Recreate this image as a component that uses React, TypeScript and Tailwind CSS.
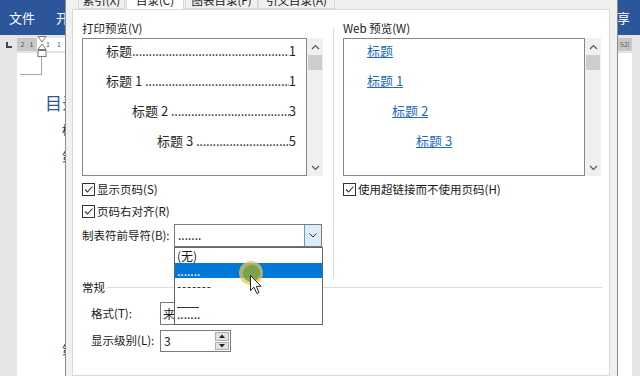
import React from 'react';

const FONT = "font-['Noto_Sans_CJK_SC','Noto_Sans',sans-serif]";

function Check() {
  return (
    <div className="w-[13px] h-[13px] border border-[#333] bg-white flex items-center justify-center">
      <svg width="11" height="11" viewBox="0 0 11 11">
        <path d="M2 5.5 L4.5 8 L9.5 2.5" fill="none" stroke="#333" strokeWidth="1.1" />
      </svg>
    </div>
  );
}

function CheckRow({ label, className = '' }: { label: string; className?: string }) {
  return (
    <div className={`flex items-center gap-[2px] h-[16px] ${className}`}>
      <Check />
      <span className="text-[11.5px] leading-[16px] text-[#1a1a1a]">{label}</span>
    </div>
  );
}

function Scrollbar() {
  return (
    <div className="w-[16px] h-[138px] bg-[#f0f0f0] flex flex-col">
      <div className="h-[17px] flex items-center justify-center">
        <svg width="9" height="6" viewBox="0 0 9 6">
          <path d="M1 5 L4.5 1.5 L8 5" fill="none" stroke="#555" strokeWidth="1.2" />
        </svg>
      </div>
      <div className="h-[15px] mx-[1px] bg-[#cdcdcd]" />
      <div className="flex-1" />
      <div className="h-[16px] flex items-center justify-center">
        <svg width="9" height="6" viewBox="0 0 9 6">
          <path d="M1 1 L4.5 4.5 L8 1" fill="none" stroke="#555" strokeWidth="1.2" />
        </svg>
      </div>
    </div>
  );
}

const printRows = [
  { label: '标题', page: '1', indent: 'pl-[23px]' },
  { label: '标题 1 ', page: '1', indent: 'pl-[23px]' },
  { label: '标题 2 ', page: '3', indent: 'pl-[49px]' },
  { label: '标题 3 ', page: '5', indent: 'pl-[74px]' },
];

const webRows = [
  { label: '标题', indent: 'pl-[23px]' },
  { label: '标题 1', indent: 'pl-[23px]' },
  { label: '标题 2', indent: 'pl-[48px]' },
  { label: '标题 3', indent: 'pl-[72px]' },
];

export default function App() {
  return (
    <div className={`relative w-[640px] h-[376px] overflow-hidden bg-[#e6e6e6] ${FONT}`}>
      {/* Word window behind */}
      <div className="flex flex-col h-full">
        <div className="h-[35px] bg-[#2b579a] flex items-center justify-between text-white text-[13px]">
          <div className="flex items-center">
            <span className="ml-[9px]">文件</span>
            <span className="ml-[21px]">开始</span>
          </div>
          <span className="mr-[10px]">共享</span>
        </div>
        <div className="h-[18px] flex items-center">
          <div className="w-[17px] h-full flex items-center justify-center">
            <div className="w-[6px] h-[6px] border-l-2 border-b-2 border-[#444] mt-[2px]" />
          </div>
          <div className="flex-1 h-[13px] flex text-[7px] leading-[13px] text-[#555]">
            <div className="w-[20px] bg-[#c8c8c8] flex justify-around px-[1px]">
              <span>2</span>
              <span>1</span>
            </div>
            <div className="flex-1 bg-white flex gap-[7px] pl-[9px]">
              <span>1</span>
              <span>1</span>
              <span>2</span>
            </div>
            <div className="w-[14px] bg-[#c8c8c8] pl-[2px]">52|</div>
          </div>
          <div className="w-[8px]" />
        </div>
        <div className="flex-1 flex">
          <div className="w-[17px]" />
          <div className="flex-1 bg-white flex flex-col">
            <div className="ml-[3px] mt-[4px] w-[22px] h-[18px] border-r border-b border-[#a6a6a6]" />
            <div className="pl-[28px] mt-[18px] text-[17px] leading-[20px] text-[#2f5597]">目录</div>
            <div className="pl-[45px] mt-[7px] text-[12px] leading-[20px] text-[#222]">标题</div>
            <div className="pl-[45px] mt-[7px] text-[12px] leading-[20px] text-[#222]">第一</div>
            <div className="pl-[45px] mt-[173px] text-[12px] leading-[20px] text-[#222]">第二</div>
          </div>
          <div className="w-[8px]" />
        </div>
      </div>

      {/* ruler indent marker */}
      <svg className="absolute left-[37px] top-[36px]" width="10" height="22" viewBox="0 0 10 22">
        <path d="M1 0.5 L9 0.5 L5 6 Z" fill="#fff" stroke="#777" />
        <path d="M5 8 L9 13.5 L1 13.5 Z" fill="#fff" stroke="#777" />
        <rect x="1" y="14.5" width="8" height="6" fill="#fff" stroke="#777" />
      </svg>

      {/* Dialog window */}
      <div className="absolute left-[65px] top-0 w-[553px] h-[376px] bg-[#f0f0f0] border-l border-r border-[#8c8c8c] flex flex-col pl-[6px] pr-[7px] text-[#1a1a1a]">
        <div className="h-[9px] overflow-hidden shrink-0">
          <div className="flex -mt-[11px] pl-[6px] text-[11.5px]">
            <div className="w-[47px] h-[20px] leading-[20px] text-center border border-[#d9d9d9] bg-[#f0f0f0]">索引(X)</div>
            <div className="w-[58px] h-[20px] leading-[20px] text-center border border-[#d9d9d9] border-b-0 bg-white ml-[1px]">目录(C)</div>
            <div className="w-[73px] h-[20px] leading-[20px] text-center border border-[#d9d9d9] bg-[#f0f0f0] ml-[1px]">图表目录(F)</div>
            <div className="w-[77px] h-[20px] leading-[20px] text-center border border-[#d9d9d9] bg-[#f0f0f0]">引文目录(A)</div>
          </div>
        </div>

        <div className="flex-1 bg-white border border-[#d9d9d9] pt-[10px] pl-[9px] flex flex-col">
          {/* top section: previews */}
          <div className="flex items-start">
            <div className="w-[241px] flex flex-col">
              <div className="h-[16px] text-[11.5px] leading-[16px]">打印预览(V)</div>
              <div className="mt-[2px] flex">
                <div className="w-[225px] h-[138px] border border-[#828790] flex flex-col gap-[10px] pt-[2px] pr-[10px] text-[13px] text-[#262626]">
                  {printRows.map((r) => (
                    <div key={r.label} className={`flex items-center h-[20px] leading-[20px] ${r.indent}`}>
                      <span className="whitespace-pre">{r.label}</span>
                      <span className="flex-1 min-w-0 overflow-hidden whitespace-nowrap tracking-[-0.3px]">
                        {'.'.repeat(90)}
                      </span>
                      <span>{r.page}</span>
                    </div>
                  ))}
                </div>
                <Scrollbar />
              </div>
              <CheckRow label="显示页码(S)" className="mt-[5px]" />
              <CheckRow label="页码右对齐(R)" className="mt-[6px]" />
              <div className="mt-[5px] flex items-center h-[23px]">
                <span className="w-[92px] text-[11.5px]">制表符前导符(B):</span>
                <div className="relative w-[148px] h-[23px] border border-[#7a7a7a] flex">
                  <span className="flex-1 pl-[3px] text-[12px] leading-[20px]">.......</span>
                  <div className="w-[17px] h-full bg-[#dcecfc] border-l border-[#569de5] flex items-center justify-center">
                    <svg width="8" height="5" viewBox="0 0 8 5">
                      <path d="M0.5 0.5 L4 4 L7.5 0.5" fill="none" stroke="#333" strokeWidth="1" />
                    </svg>
                  </div>
                  {/* open dropdown list */}
                  <div className="absolute z-10 left-[-1px] top-[22px] w-[149px] border border-[#646464] bg-white flex flex-col text-[12px] leading-[15px]">
                    <div className="h-[15px] pl-[2px]">(无)</div>
                    <div className="h-[15px] pl-[2px] bg-[#0078d7] text-white">.......</div>
                    <div className="h-[15px] pl-[2px] tracking-[0.8px]">-------</div>
                    <div className="h-[15px] pl-[2px] flex items-end">
                      <div className="w-[22px] h-px bg-[#333]" />
                    </div>
                    <div className="h-[16px] pl-[2px] leading-[12px]">.......</div>
                  </div>
                </div>
              </div>
            </div>

            <div className="ml-[10px] mt-[8px] w-px h-[250px] bg-[#dcdcdc]" />

            <div className="ml-[9px] w-[258px] flex flex-col">
              <div className="h-[16px] text-[11.5px] leading-[16px]">Web 预览(W)</div>
              <div className="mt-[2px] flex">
                <div className="w-[243px] h-[138px] border border-[#828790] flex flex-col gap-[10px] pt-[2px] text-[13px] text-[#1f6cc0]">
                  {webRows.map((r) => (
                    <div key={r.label} className={`h-[20px] leading-[20px] ${r.indent}`}>
                      <span className="underline whitespace-pre">{r.label}</span>
                    </div>
                  ))}
                </div>
                <Scrollbar />
              </div>
              <CheckRow label="使用超链接而不使用页码(H)" className="mt-[5px]" />
            </div>
          </div>

          {/* general section */}
          <div className="mt-[1px] mr-[6px] h-[16px] flex items-center">
            <span className="text-[11.5px] leading-[16px]">常规</span>
            <div className="flex-1 h-px bg-[#dcdcdc] ml-[2px]" />
          </div>
          <div className="mt-[7px] pl-[9px] flex items-center h-[23px]">
            <span className="w-[69px] text-[11.5px]">格式(T):</span>
            <div className="w-[140px] h-[23px] border border-[#7a7a7a] pl-[2px] text-[12px] leading-[21px]">来自模板</div>
          </div>
          <div className="mt-[5px] pl-[9px] flex items-center h-[22px]">
            <span className="w-[69px] text-[11.5px]">显示级别(L):</span>
            <div className="w-[71px] h-[22px] border border-[#7a7a7a] flex">
              <span className="flex-1 pl-[3px] text-[12px] leading-[20px]">3</span>
              <div className="w-[16px] flex flex-col gap-px p-px">
                <div className="flex-1 bg-[#e1e1e1] border border-[#adadad] flex items-center justify-center">
                  <svg width="6" height="4" viewBox="0 0 6 4">
                    <path d="M0 4 L3 0.5 L6 4 Z" fill="#222" />
                  </svg>
                </div>
                <div className="flex-1 bg-[#e1e1e1] border border-[#adadad] flex items-center justify-center">
                  <svg width="6" height="4" viewBox="0 0 6 4">
                    <path d="M0 0 L3 3.5 L6 0 Z" fill="#222" />
                  </svg>
                </div>
              </div>
            </div>
          </div>
        </div>
      </div>

      {/* click highlight and mouse cursor */}
      <div className="absolute z-20 left-[239px] top-[261px] w-[24px] h-[24px] rounded-full bg-[#e8c550]/75 flex items-center justify-center">
        <div className="w-[17px] h-[17px] rounded-full bg-[#6b9e45]/80" />
      </div>
      <svg className="absolute z-30 left-[250px] top-[275px]" width="13" height="20" viewBox="0 0 13 20">
        <path d="M0.5 0.5 L0.5 15.5 L4 12.2 L6.8 18.5 L9 17.5 L6.3 11.3 L11 11.3 Z" fill="#fff" stroke="#222" strokeWidth="1" />
      </svg>
    </div>
  );
}
